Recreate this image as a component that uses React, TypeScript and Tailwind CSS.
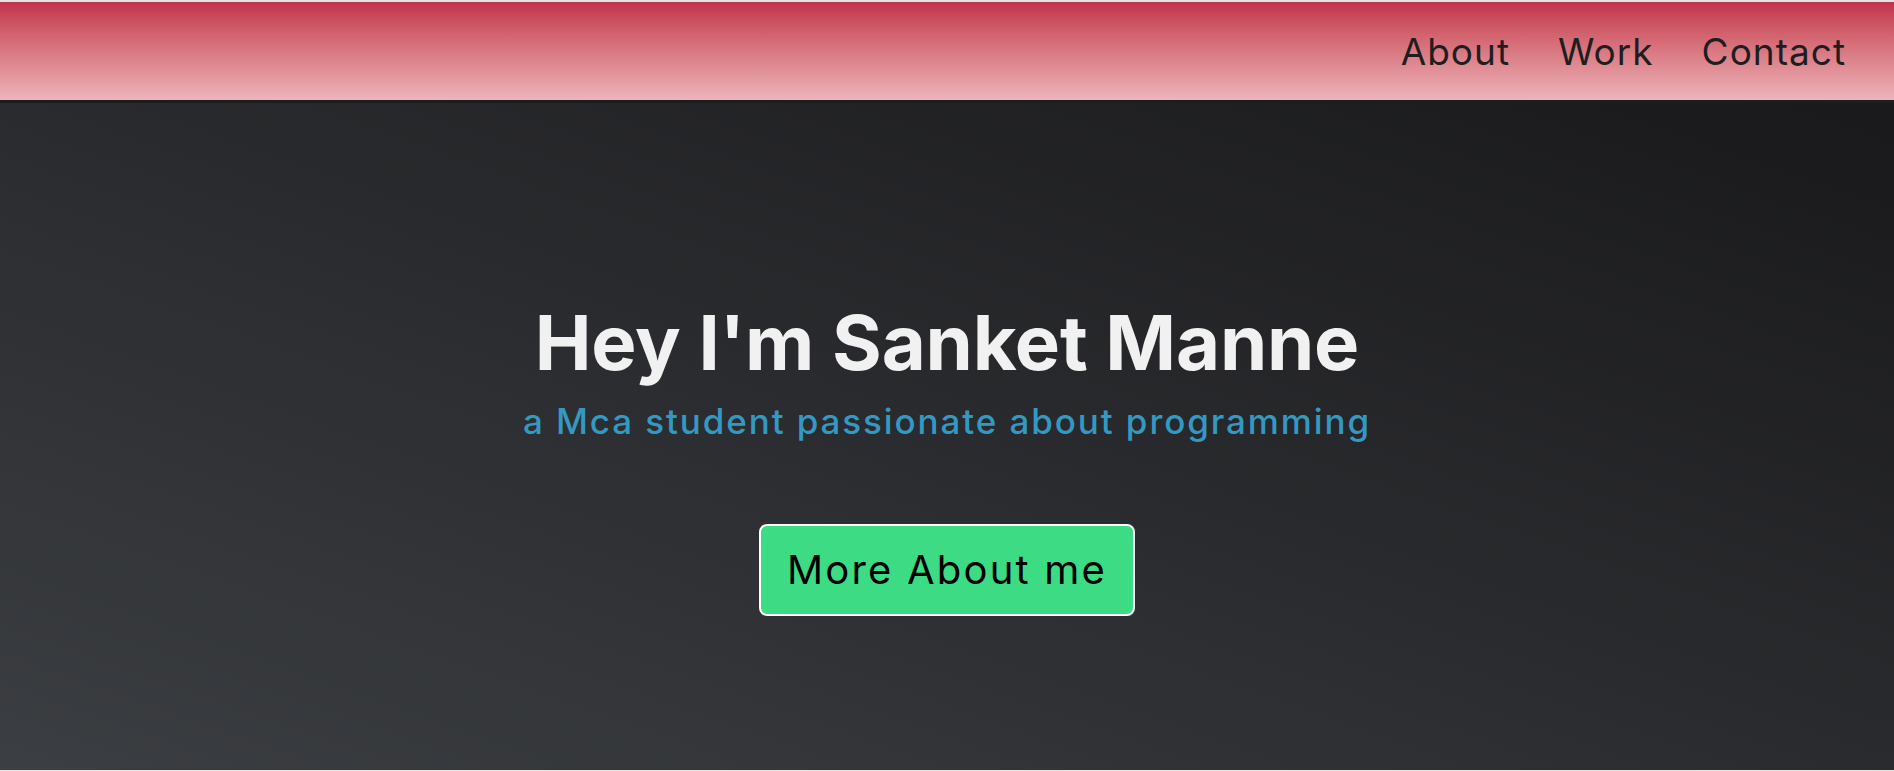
import React from "react";

const font = { fontFamily: "Inter, 'Liberation Sans', sans-serif" };

const links = ["About", "Work", "Contact"];

const App: React.FC = () => {
  return (
    <div
      className="flex h-[771px] w-full flex-col bg-[#e4e4e4] pt-[2px] pb-[1px]"
      style={font}
    >
      {/* Top nav */}
      <header className="flex h-[101px] shrink-0 items-center justify-end gap-12 border-b-[3px] border-[#1d1d1f] bg-linear-to-b from-[#c0324a] to-[#ecb4bb] pr-12">
        {links.map((l) => (
          <a key={l} href="#" className="text-[37px] leading-none text-[#1e1e21] tracking-[1px]">
            {l}
          </a>
        ))}
      </header>

      {/* Hero */}
      <main className="flex flex-1 flex-col items-center bg-linear-to-tr from-[#3b3e42] via-[#2a2b2e] to-[#19191b] pt-[201px]">
        <h1 className="text-[76px] font-bold leading-none tracking-[-0.2px] text-[#f1f1f1]">
          Hey I'm Sanket Manne
        </h1>
        <p className="mt-6 text-[35px] font-medium leading-none tracking-[1.9px] text-[#3399c2]">
          a Mca student passionate about programming
        </p>
        <button className="mt-[85px] flex h-[92px] items-center rounded-lg border-2 border-white bg-[#3ddc84] px-[26px] text-[40px] leading-none tracking-[2.2px] text-black">
          More About me
        </button>
      </main>
    </div>
  );
};

export default App;
